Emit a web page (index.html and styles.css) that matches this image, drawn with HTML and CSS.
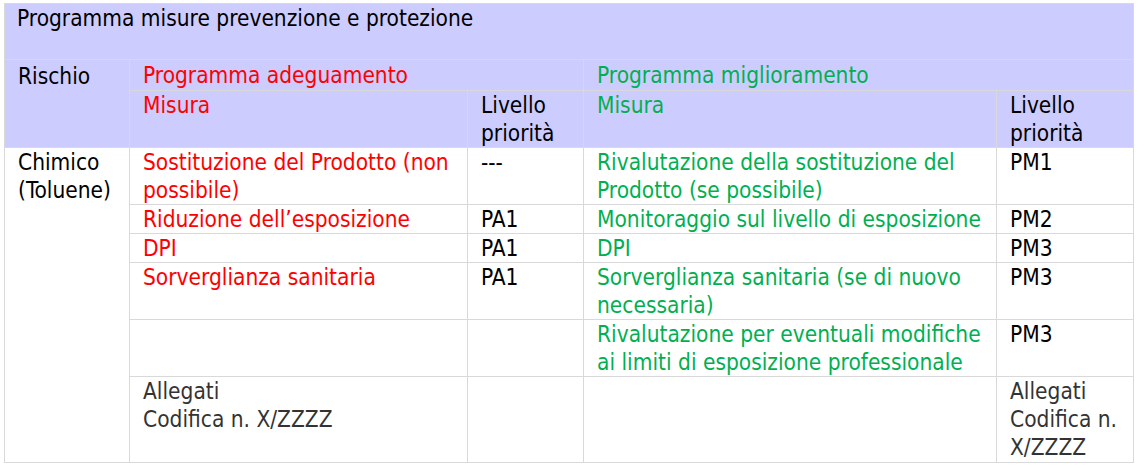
FILE: index.html
```html
<!DOCTYPE html>
<html lang="it">
<head>
<meta charset="utf-8">
<title>Programma misure prevenzione e protezione</title>
<link rel="stylesheet" href="styles.css">
</head>
<body>
<table class="grid">
  <colgroup>
    <col class="c1"><col class="c2"><col class="c3"><col class="c4"><col class="c5">
  </colgroup>
  <tr class="head title">
    <td colspan="5">Programma misure prevenzione e protezione</td>
  </tr>
  <tr class="head h1">
    <td rowspan="2">Rischio</td>
    <td colspan="2" class="red">Programma adeguamento</td>
    <td colspan="2" class="green">Programma miglioramento</td>
  </tr>
  <tr class="head h2">
    <td class="red">Misura</td>
    <td>Livello priorità</td>
    <td class="green">Misura</td>
    <td>Livello priorità</td>
  </tr>
  <tr>
    <td rowspan="6">Chimico (Toluene)</td>
    <td class="red">Sostituzione del Prodotto (non possibile)</td>
    <td>---</td>
    <td class="green">Rivalutazione della sostituzione del Prodotto (se possibile)</td>
    <td>PM1</td>
  </tr>
  <tr>
    <td class="red">Riduzione dell’esposizione</td>
    <td>PA1</td>
    <td class="green">Monitoraggio sul livello di esposizione</td>
    <td>PM2</td>
  </tr>
  <tr>
    <td class="red">DPI</td>
    <td>PA1</td>
    <td class="green">DPI</td>
    <td>PM3</td>
  </tr>
  <tr>
    <td class="red">Sorverglianza sanitaria</td>
    <td>PA1</td>
    <td class="green">Sorverglianza sanitaria (se di nuovo necessaria)</td>
    <td>PM3</td>
  </tr>
  <tr>
    <td></td>
    <td></td>
    <td class="green">Rivalutazione per eventuali modifiche ai limiti di esposizione professionale</td>
    <td>PM3</td>
  </tr>
  <tr class="last">
    <td class="gray">Allegati<br>Codifica n. X/ZZZZ</td>
    <td></td>
    <td></td>
    <td class="gray">Allegati<br>Codifica n. X/ZZZZ</td>
  </tr>
</table>
</body>
</html>
```

FILE: styles.css
```css
html, body {
  margin: 0;
  padding: 0;
  background: #ffffff;
}
body {
  padding: 3px 0 0 4px;
  font-family: "DejaVu Sans Condensed", "DejaVu Sans", sans-serif;
  font-size: 22.5px;
  color: #000000;
}
.grid {
  border-collapse: collapse;
  table-layout: fixed;
  width: 1129px;
}
.c1 { width: 125px; }
.c2 { width: 338px; }
.c3 { width: 116px; }
.c4 { width: 413px; }
.c5 { width: 137px; }
.grid td {
  border: 1px solid #d9d9d9;
  padding: 0 4px 0 13px;
  vertical-align: top;
  line-height: 28px;
}
.head td {
  background: #ccccff;
}
.title td {
  height: 55px;
  padding-left: 12px;
}
.h1 td { height: 29px; padding-top: 1px; }
.h1 td[rowspan] { padding-top: 2px; }
.red { color: #ff0000; }
.green { color: #00b050; }
.gray { color: #333333; }
.last td { height: 85px; }
```
